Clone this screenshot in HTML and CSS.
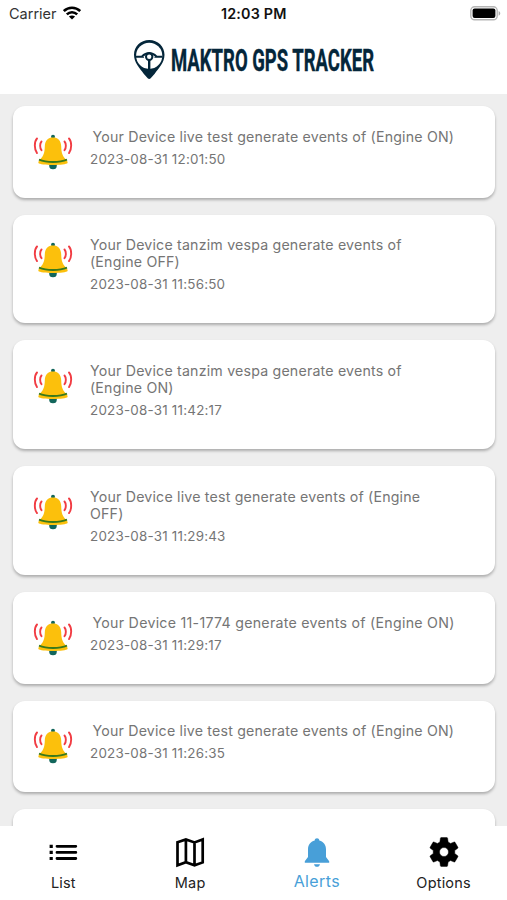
FILE: index.html
```html
<!DOCTYPE html>
<html lang="en">
<head>
<meta charset="utf-8">
<title>Maktro GPS Tracker</title>
<link rel="stylesheet" href="styles.css">
</head>
<body>
<svg class="defs" width="0" height="0" aria-hidden="true">
  <symbol id="bell" viewBox="0 0 40 36">
    <circle cx="20" cy="2.800" r="2" fill="#12665c"/>
    <path d="M16.200 30.500h7.600v1.200a3.800 3.500 0 0 1-7.600 0z" fill="#12665c"/>
    <path d="M20 3.300c-5 0-8 3.700-8.200 9-.2 6.400-1 9.300-4.700 13.200-1.100 1.300-2 2.400-1.700 3.400.8 1.200 7.600 2 14.600 2s13.800-.8 14.600-2c.3-1-.6-2.100-1.700-3.400-3.700-3.900-4.500-6.800-4.700-13.200-.2-5.300-3.200-9-8.200-9z" fill="#fcc00c"/>
    <path d="M6 25.600c7.500 3.200 20.500 3.200 28 0" fill="none" stroke="#38791c" stroke-width="1.900"/>
    <path d="M4 4.500c-2.900 3-2.900 11 0 14.600M8.500 7.500c-1.800 2-1.800 6.500 0 8.700M36 4.500c2.900 3 2.900 11 0 14.600M31.500 7.500c1.800 2 1.800 6.500 0 8.700" fill="none" stroke="#f13c43" stroke-width="1.900" stroke-linecap="round"/>
  </symbol>
</svg>
<div class="app">
  <header class="header">
    <div class="status">
      <div class="carrier"><span>Carrier</span>
        <svg width="18" height="14" viewBox="0 0 18 14"><g fill="none" stroke="#000" stroke-width="2.600"><path d="M.8 5c4.600-4.400 11.800-4.400 16.400 0M3.800 8.400c3-2.900 7.400-2.900 10.400 0"/></g><path d="M5.900 10.600c1.800-1.600 4.400-1.600 6.200 0L9 13.600z"/></svg>
      </div>
      <div class="clock">12:03 PM</div>
      <svg class="battery" width="31" height="15" viewBox="0 0 31 15"><rect x=".8" y=".8" width="26.400" height="13" rx="3.800" fill="#fff" stroke="#b5b5b5" stroke-width="1.400"/><rect x="2.600" y="2.600" width="22.800" height="9.400" rx="2"/><path d="M28.600 5c2.200 1 2.200 3.800 0 4.800z" fill="#aaa"/></svg>
    </div>
    <div class="brand">
      <svg width="250" height="48" viewBox="0 0 250 48">
        <path d="M16.200 0C7.500 0 1 6.500 1 14.800c0 7.700 5.600 13.500 9.700 18.900l4 4.600q1.500 1.400 3 0l4-4.600c4.100-5.400 9.800-11.200 9.800-18.900C31.500 6.500 25 0 16.200 0z" fill="#04263a"/>
        <circle cx="16.200" cy="15.800" r="13.100" fill="#fff"/>
        <g fill="none" stroke="#04263a"><path d="M3 16.800h8M21.400 16.800h8M9 16.500q3.400-3.400 7.200-3.400t7.200 3.400" stroke-width="2"/><path d="M16.200 19.500v10" stroke-width="2.400"/><circle cx="16.200" cy="16.800" r="3.200" fill="#fff" stroke-width="2"/></g>
        <text class="wordmark" x="38" y="31" textLength="203" lengthAdjust="spacingAndGlyphs">MAKTRO GPS TRACKER</text>
      </svg>
    </div>
  </header>
  <main class="list">
    <article class="card"><svg class="icon"><use href="#bell"/></svg><div class="info"><p class="message single">Your Device live test generate events of (Engine ON)</p><time>2023-08-31 12:01:50</time></div></article>
    <article class="card"><svg class="icon"><use href="#bell"/></svg><div class="info"><p class="message">Your Device tanzim vespa generate events of<br>(Engine OFF)</p><time>2023-08-31 11:56:50</time></div></article>
    <article class="card"><svg class="icon"><use href="#bell"/></svg><div class="info"><p class="message">Your Device tanzim vespa generate events of<br>(Engine ON)</p><time>2023-08-31 11:42:17</time></div></article>
    <article class="card"><svg class="icon"><use href="#bell"/></svg><div class="info"><p class="message">Your Device live test generate events of (Engine<br>OFF)</p><time>2023-08-31 11:29:43</time></div></article>
    <article class="card"><svg class="icon"><use href="#bell"/></svg><div class="info"><p class="message single numeric">Your Device 11-1774 generate events of (Engine ON)</p><time>2023-08-31 11:29:17</time></div></article>
    <article class="card"><svg class="icon"><use href="#bell"/></svg><div class="info"><p class="message single">Your Device live test generate events of (Engine ON)</p><time>2023-08-31 11:26:35</time></div></article>
    <article class="card"></article>
  </main>
  <nav class="tabs">
    <a class="tab"><svg width="32" height="32" viewBox="0 0 32 32"><path d="M2.600 8.700h3.200v3.200H2.600zm0 6.100h3.200V18H2.600zm0 6.100h3.200v3.200H2.600z"/><path d="M10 10.300h18.800M10 16.400h18.800M10 22.500h18.800" stroke="#000" stroke-width="2.800" stroke-linecap="round"/></svg><span>List</span></a>
    <a class="tab"><svg width="32" height="32" viewBox="0 0 32 32"><path d="M3.500 6.300l8.400-2.900 8.600 3 8.200-3v23l-8.200 2.900-8.600-3-8.400 3zM11.900 3.400v22.900M20.500 6.400v22.900" fill="none" stroke="#000" stroke-width="2.700"/></svg><span>Map</span></a>
    <a class="tab active"><svg width="32" height="32" viewBox="0 0 32 32"><path d="M13.700 4.500c0-3 4.600-3 4.600 0C22.700 5.600 25 9 25 13.500V21l3.200 4.200v1.600H3.800v-1.600L7 21v-7.500C7 9 9.300 5.600 13.700 4.500zM13 28.300h6c-.5 3.400-5.500 3.400-6 0z"/></svg><span>Alerts</span></a>
    <a class="tab"><svg width="36" height="36" viewBox="0 0 24 24"><path d="M19.140 12.940c.04-.3.060-.61.060-.94 0-.32-.02-.64-.07-.94l2.030-1.580c.18-.14.230-.41.120-.61l-1.920-3.320c-.12-.22-.37-.29-.59-.22l-2.390.96c-.5-.38-1.030-.7-1.620-.94l-.36-2.540c-.04-.24-.24-.41-.48-.41h-3.840c-.24 0-.43.170-.47.410l-.36 2.540c-.59.240-1.130.57-1.620.94l-2.390-.96c-.22-.08-.47 0-.59.220L2.740 8.870c-.12.210-.08.470.12.610l2.030 1.580c-.05.300-.09.630-.09.940s.02.640.070.940l-2.030 1.580c-.18.140-.23.410-.12.610l1.920 3.320c.12.220.37.290.59.220l2.390-.96c.5.380 1.030.7 1.620.94l.36 2.540c.05.240.24.410.48.410h3.840c.24 0 .44-.17.470-.41l.36-2.540c.59-.24 1.130-.56 1.620-.94l2.390.96c.22.080.47 0 .59-.22l1.920-3.320c.12-.22.070-.47-.12-.61l-2.010-1.580zM12 15a3 3 0 1 1 0-6 3 3 0 0 1 0 6z" stroke="#000" stroke-width=".3"/></svg><span>Options</span></a>
  </nav>
</div>
</body>
</html>
```
FILE: styles.css
```css
* { box-sizing: border-box; }
body { margin: 0; font-family: Inter, "Liberation Sans", sans-serif; }
.defs { display: block; }
.app { height: 900px; display: flex; flex-direction: column; overflow: hidden; background: #fff; }
.header { flex: 0 0 94px; }
.status { height: 27px; padding: 0 6px 0 9px; display: grid; grid-template-columns: 1fr 66px 1fr; align-items: center; font-size: 14.500px; color: #111; }
.carrier { display: flex; align-items: center; gap: 6px; color: #333; }
.carrier svg { margin-top: -2px; }
.clock { font-weight: 600; font-size: 14.300px; letter-spacing: .2px; white-space: nowrap; margin-left: -1px; }
.battery { justify-self: end; }
.brand { padding: 13px 0 0 133px; height: 67px; }
.brand svg { display: block; overflow: visible; }
.wordmark { font: 700 32px Roboto, sans-serif; fill: #04263a; stroke: #04263a; stroke-width: .4px; }
.list { flex: 1; min-height: 0; overflow: hidden; background: #eee; padding: 12px 12px 0 13px; display: flex; flex-direction: column; gap: 17px; }
.card { flex: none; min-height: 91.600px; padding: 21.600px 20px 30px; display: flex; background: #fff; border-radius: 12px; box-shadow: 0 2px 3px rgba(0, 0, 0, .28); }
.icon { flex: none; width: 40px; height: 36px; margin: 6px 17px -4px 0; }
.info { color: #757575; white-space: nowrap; }
.message { margin: 0 0 4.700px; font-size: 14.200px; line-height: 17.300px; letter-spacing: .19px; }
.single { padding-left: 2.500px; }
.numeric { letter-spacing: .27px; }
time { display: block; font-size: 13.400px; line-height: 18px; letter-spacing: .22px; }
.tabs { flex: 0 0 74px; display: grid; grid-template-columns: repeat(4, 1fr); background: #fff; }
.tab { display: flex; flex-direction: column; align-items: center; font-size: 14.500px; color: #222; }
.tab svg { height: 36px; margin-top: 8px; fill: #000; }
.tab span { line-height: 20px; margin-top: 3px; letter-spacing: .2px; }
.active { color: #489fd8; font-size: 16px; }
.tab.active svg { fill: #489fd8; }
.tab.active span { margin-top: 1px; letter-spacing: .4px; }
```
